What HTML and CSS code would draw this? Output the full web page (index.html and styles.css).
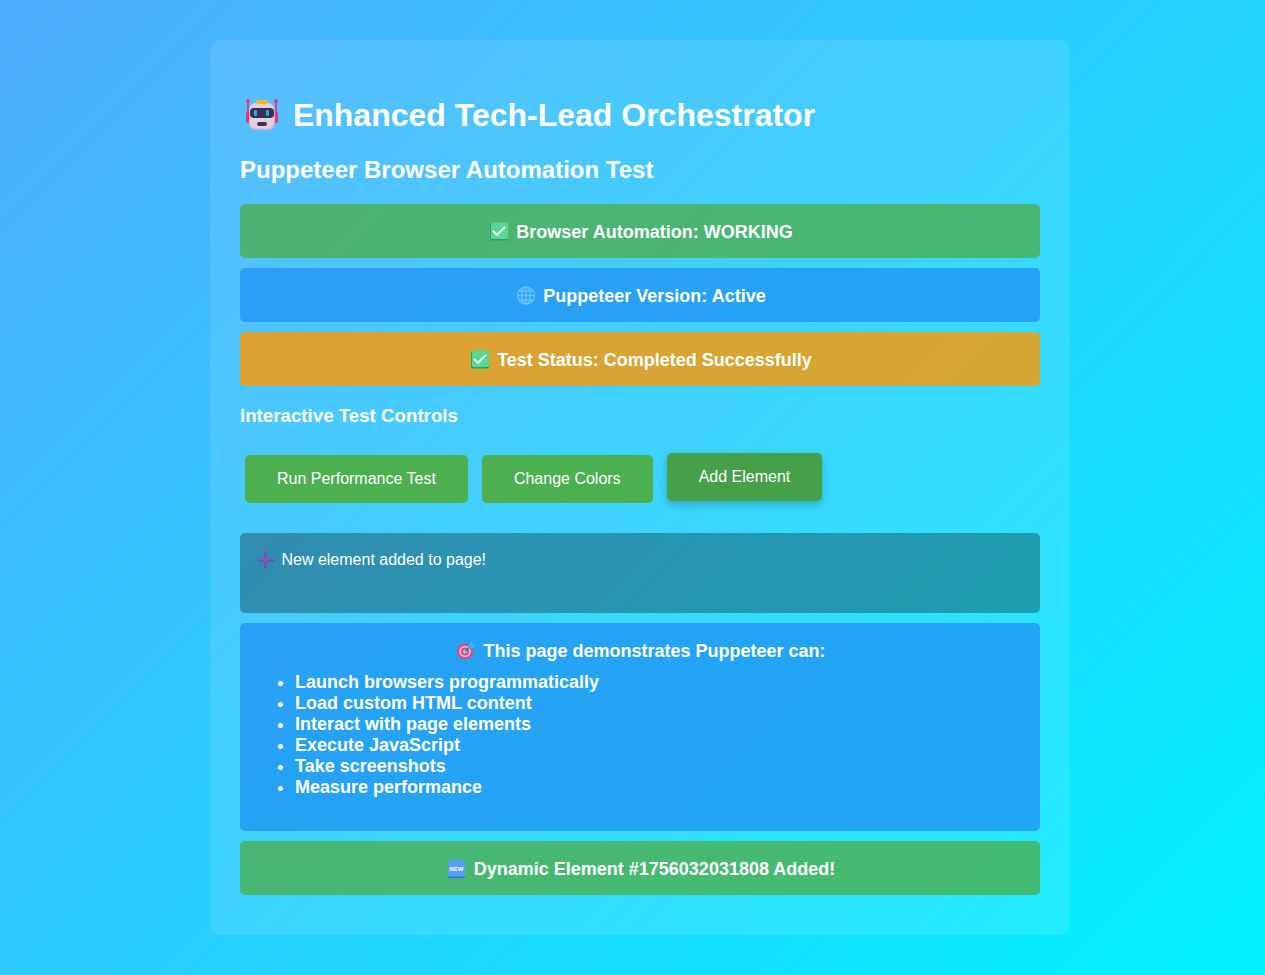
FILE: index.html
```html
<!DOCTYPE html>
<html lang="en">
<head>
<meta charset="utf-8">
<title>Enhanced Tech-Lead Orchestrator</title>
<link rel="stylesheet" href="styles.css">
</head>
<body>
<svg class="defs" aria-hidden="true">
  <symbol id="check" viewBox="0 0 24 24">
    <rect x="3" y="4" width="18" height="17.5" rx="1.5" fill="#21a56b"/>
    <rect x="4" y="3.5" width="17" height="16.5" rx="1" fill="#55d890"/>
    <path d="M6 12l4 4L18 8" fill="none" stroke="#fff" stroke-width="1.8"/>
  </symbol>
</svg>
<main class="card">
  <h1 class="title"><svg class="icon" viewBox="0 0 44 44" aria-hidden="true">
    <path d="M8 11v15M36 11v15" stroke="#d72e69" stroke-width="1.5"/>
    <circle cx="8" cy="10" r="2" fill="#e83b72"/><circle cx="36" cy="10" r="2" fill="#e83b72"/>
    <rect x="6" y="21" width="5" height="11" rx="2" fill="#f02f75"/><rect x="33" y="21" width="5" height="11" rx="2" fill="#f02f75"/>
    <rect x="9" y="12" width="26" height="27" rx="6" fill="#c9b2d6"/>
    <rect x="9.5" y="12" width="24" height="25.5" rx="6" fill="#e0d0e6"/>
    <rect x="16" y="9" width="12" height="4" rx="2" fill="#f8b51d"/>
    <rect x="10" y="17" width="24" height="10" rx="4" fill="#38304f"/>
    <rect x="14" y="19" width="3" height="6" rx="1" fill="#27a9ee"/><rect x="26" y="19" width="3" height="6" rx="1" fill="#27a9ee"/>
    <rect x="17" y="31" width="10" height="4" rx="2" fill="#433247"/>
  </svg> Enhanced Tech-Lead Orchestrator</h1>
  <h2 class="subtitle">Puppeteer Browser Automation Test</h2>

  <div class="status success"><svg class="icon" aria-hidden="true"><use href="#check"/></svg> Browser Automation: WORKING</div>
  <div class="status info"><svg class="icon" viewBox="0 0 24 24" aria-hidden="true">
    <circle cx="12" cy="12.5" r="8.5" fill="#2f9df0"/>
    <g fill="none" stroke="#63c6fb" stroke-width="1.3"><circle cx="12" cy="12.5" r="8.5"/><ellipse cx="12" cy="12.5" rx="4.2" ry="8.5"/><path d="M12 4v17M3.5 12.5h17M5 8h14M5 17h14"/></g>
  </svg> Puppeteer Version: Active</div>
  <div class="status warning"><svg class="icon" aria-hidden="true"><use href="#check"/></svg> Test Status: Completed Successfully</div>

  <h3 class="section">Interactive Test Controls</h3>
  <div class="controls">
    <button class="button" type="button">Run Performance Test</button>
    <button class="button" type="button">Change Colors</button>
    <button class="button raised" type="button">Add Element</button>
  </div>

  <div class="log" role="status"><svg class="icon" viewBox="0 0 22 22" aria-hidden="true">
    <path d="M10.5 5v14M4 12h14" stroke="#5a4aa4" stroke-width="3" stroke-linecap="round"/>
    <path d="M10.5 4.5v14M4 11.5h14" stroke="#8657c6" stroke-width="2" stroke-linecap="round"/>
  </svg> New element added to page!</div>

  <div class="status info"><svg class="icon" viewBox="0 0 24 24" aria-hidden="true">
    <circle cx="11" cy="13.5" r="8" fill="#df4878"/><circle cx="11" cy="13.5" r="5.8" fill="#d7c5e4"/><circle cx="11" cy="13.5" r="4" fill="#df4878"/><circle cx="11" cy="13.5" r="2" fill="#d7c5e4"/>
    <path d="M11 13.5l7-7" stroke="#366fb4" stroke-width="1.5"/><path d="M14 10l1-4 3-3 .5 3L22 6.500l-3 3.500-4 1z" fill="#43aeee"/>
  </svg> This page demonstrates Puppeteer can:
    <ul class="features">
      <li>Launch browsers programmatically</li>
      <li>Load custom HTML content</li>
      <li>Interact with page elements</li>
      <li>Execute JavaScript</li>
      <li>Take screenshots</li>
      <li>Measure performance</li>
    </ul>
  </div>
  <div class="status success"><svg class="icon" viewBox="0 0 24 24" aria-hidden="true">
    <rect x="3" y="4" width="17" height="18" rx="1" fill="#2f75d0"/><rect x="3" y="4" width="17" height="16.5" rx="1" fill="#5b9ff5"/>
    <text class="badge-text" x="11.5" y="14.5" text-anchor="middle">NEW</text>
  </svg> Dynamic Element #1756032031808 Added!</div>
</main>
</body>
</html>
```
FILE: styles.css
```css
* { box-sizing: border-box; }

body {
  margin: 0;
  min-height: 100vh;
  padding: 40px 0 40px 15px;
  font-family: "Liberation Sans", Arial, sans-serif;
  font-size: 16px;
  color: #fff;
  background: linear-gradient(135deg, #4facfe 0%, #00f2fe 100%);
}

.defs { position: absolute; width: 0; height: 0; }

.card {
  max-width: 860px;
  margin: 0 auto;
  padding: 30px;
  border-radius: 10px;
  background: rgba(255, 255, 255, 0.1);
}

.title { margin: 21px 0 17px; font-size: 32px; line-height: 48px; }
.subtitle { margin: 0 0 20px; font-size: 24px; line-height: 28px; }
.section { margin: 18px 0; line-height: 24px; }

.icon { width: 24px; height: 24px; vertical-align: top; }
.title .icon { width: 44px; height: 44px; }
.log .icon { width: 22px; height: 22px; }

.status {
  margin: 10px 0;
  padding: 15px 15px 13px;
  border-radius: 5px;
  font-size: 18px;
  font-weight: bold;
  line-height: 26px;
  text-align: center;
}
.success { background: rgba(76, 175, 80, 0.8); }
.info { background: rgba(33, 150, 243, 0.8); }
.warning { background: rgba(255, 152, 0, 0.8); }

.controls { display: flex; flex-wrap: wrap; gap: 14px; margin: 27px 5px 0; }

.button {
  padding: 15px 32px;
  border: 0;
  border-radius: 5px;
  font: inherit;
  line-height: 18px;
  color: #fff;
  background: #4caf50;
  cursor: pointer;
}
.raised {
  background: #45a049;
  box-shadow: 0 4px 8px rgba(0, 0, 0, 0.2);
  transform: translateY(-2px);
}

.log {
  min-height: 80px;
  margin: 30px 0 10px;
  padding: 15px;
  border-radius: 5px;
  line-height: 24px;
  background: rgba(0, 0, 0, 0.3);
}

.features {
  margin: 8px 0 20px;
  padding-left: 40px;
  line-height: 21px;
  text-align: left;
}

.badge-text { font-size: 6px; font-weight: bold; fill: #fff; }
```
